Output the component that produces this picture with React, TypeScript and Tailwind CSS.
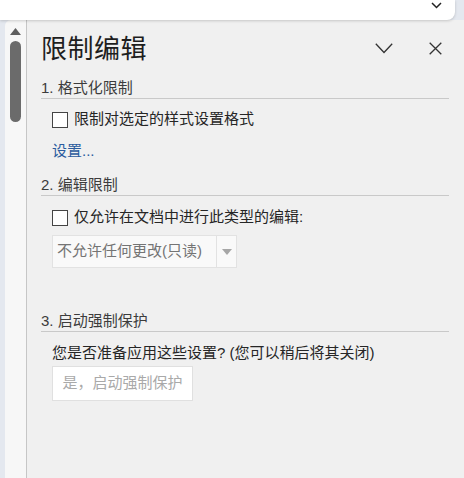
const font = { fontFamily: '"Liberation Sans", "Noto Sans CJK SC", sans-serif' }

function SectionHeader({ label, className = '' }: { label: string; className?: string }) {
  return (
    <div className={`h-[20px] flex items-center border-b border-[#c9c9c9] text-[15px] text-[#3c3c3c] ${className}`}>
      {label}
    </div>
  )
}

function CheckRow({ label, className = '' }: { label: string; className?: string }) {
  return (
    <div className={`h-[17px] flex items-center gap-[6px] pl-[11px] text-[15px] text-[#262626] ${className}`}>
      <span className="w-[16px] h-[16px] border border-[#444] bg-white shrink-0" />
      <span>{label}</span>
    </div>
  )
}

export default function App() {
  return (
    <div className="w-[464px] h-[478px] bg-[#e4e8ef] flex flex-col overflow-hidden" style={font}>
      {/* host window strip */}
      <div className="h-[20px] flex shrink-0 relative z-10">
        <div className="w-[455px] h-full bg-white rounded-br-[8px] shadow-[0_1px_3px_rgba(0,0,0,0.18)] flex justify-end items-start pr-[13px]">
          <svg width="11" height="7" viewBox="0 0 11 7" className="mt-[2px]">
            <path d="M1 1 L5.5 5.5 L10 1" fill="none" stroke="#222" strokeWidth="1.5" />
          </svg>
        </div>
      </div>

      <div className="flex flex-1 min-h-0">
        <div className="w-[5px] bg-[#e4e8ef]" />
        {/* scrollbar */}
        <div className="w-[21px] bg-[#f7f7f7] rounded-tl-[6px] flex flex-col items-center pt-[8px]">
          <svg width="11" height="7" viewBox="0 0 11 7">
            <path d="M5.5 0 L11 7 L0 7 Z" fill="#5f5f5f" />
          </svg>
          <div className="w-[11px] h-[81px] bg-[#6b6b6b] rounded-full mt-[6px]" />
        </div>
        <div className="w-px bg-[#c6c6c6]" />

        {/* task pane */}
        <div className="flex-1 bg-[#f0f0f0] pl-[14px] pr-[15px] flex flex-col">
          <div className="h-[58px] flex items-center justify-between shrink-0">
            <span className="text-[26px] text-[#1e1e1e] leading-none tracking-[0.5px]">限制编辑</span>
            <div className="flex items-center gap-[36px] pr-[7px] mt-[-2px]">
              <svg width="18" height="11" viewBox="0 0 18 11">
                <path d="M0.8 0.8 L9 9.5 L17.2 0.8" fill="none" stroke="#333" strokeWidth="1.3" />
              </svg>
              <svg width="13" height="13" viewBox="0 0 13 13">
                <path d="M0.7 0.7 L12.3 12.3 M12.3 0.7 L0.7 12.3" fill="none" stroke="#333" strokeWidth="1.3" />
              </svg>
            </div>
          </div>

          <SectionHeader label="1. 格式化限制" className="mt-0 h-[21px]" />
          <CheckRow label="限制对选定的样式设置格式" className="mt-[12px]" />
          <div className="h-[20px] flex items-center pl-[11px] mt-[13px] text-[15px] text-[#2b5c9e]">设置...</div>

          <SectionHeader label="2. 编辑限制" className="mt-[15px]" />
          <CheckRow label="仅允许在文档中进行此类型的编辑:" className="mt-[13px]" />
          <div className="ml-[11px] mt-[9px] w-[185px] h-[33px] flex bg-[#f9f9f9] border border-[#e2e2e2]">
            <div className="flex-1 flex items-center pl-[4px] text-[15px] text-[#747474]">不允许任何更改(只读)</div>
            <div className="w-[20px] border-l border-[#e2e2e2] flex items-center justify-center">
              <svg width="10" height="6" viewBox="0 0 10 6">
                <path d="M0 0 L10 0 L5 6 Z" fill="#a6a6a6" />
              </svg>
            </div>
          </div>

          <SectionHeader label="3. 启动强制保护" className="mt-[44px]" />
          <div className="h-[20px] flex items-center pl-[11px] mt-[11px] text-[15px] text-[#262626]">
            您是否准备应用这些设置? (您可以稍后将其关闭)
          </div>
          <div className="ml-[11px] mt-[3px] w-[141px] h-[35px] bg-white border border-[#e0e0e0] flex items-center justify-center text-[15px] text-[#a9a9a9]">
            是，启动强制保护
          </div>
        </div>
      </div>
    </div>
  )
}
